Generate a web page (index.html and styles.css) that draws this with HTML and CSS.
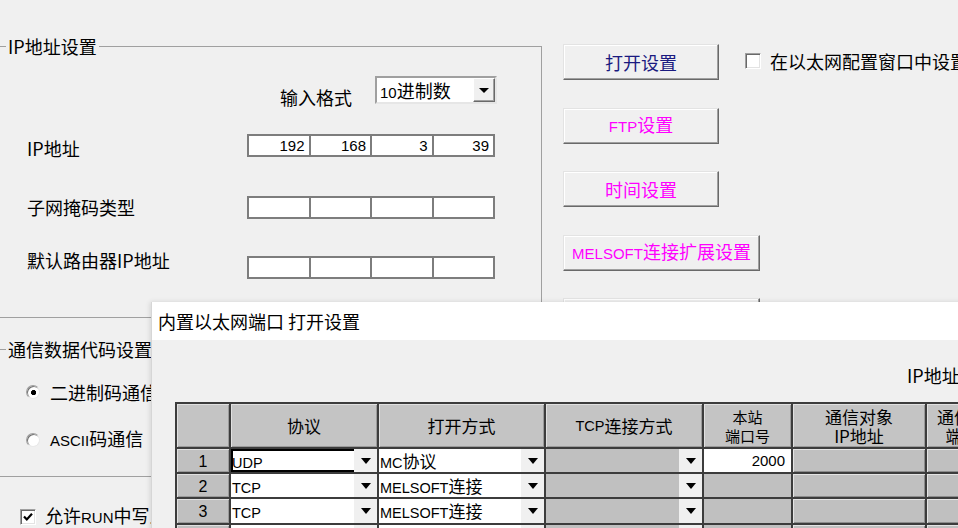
FILE: index.html
```html
<!DOCTYPE html>
<html lang="zh-CN">
<head>
<meta charset="utf-8">
<title>内置以太网端口设置</title>
<link rel="stylesheet" href="styles.css">
</head>
<body>
<div class="screen">
  <div class="main">
    <div class="left">
      <fieldset class="group ip-group">
        <legend>IP地址设置</legend>
        <div class="format-row">
          <span class="format-label">输入格式</span>
          <div class="select">
            <span class="select-value"><span class="lat">10</span>进制数</span>
            <span class="select-btn"><i class="tri tri-sm"></i></span>
          </div>
        </div>
        <div class="ip-row row-ip">
          <span class="ip-label">IP地址</span>
          <div class="ip-boxes"><span>192</span><span>168</span><span>3</span><span>39</span></div>
        </div>
        <div class="ip-row row-mask">
          <span class="ip-label">子网掩码类型</span>
          <div class="ip-boxes"><span></span><span></span><span></span><span></span></div>
        </div>
        <div class="ip-row row-gw">
          <span class="ip-label">默认路由器IP地址</span>
          <div class="ip-boxes"><span></span><span></span><span></span><span></span></div>
        </div>
      </fieldset>
      <fieldset class="group code-group">
        <legend>通信数据代码设置</legend>
        <div class="radio-row"><span class="radio checked"></span><span>二进制码通信</span></div>
        <div class="radio-row radio-row-2"><span class="radio"></span><span><span class="lat">ASCII</span>码通信</span></div>
      </fieldset>
      <div class="check-row">
        <span class="checkbox"><svg viewBox="0 0 14 14" width="14" height="14"><polyline points="3,6.5 5.8,9.5 11,3.8" fill="none" stroke="#000" stroke-width="2.2"/></svg></span>
        <span>允许<span class="lat">RUN</span>中写入(<span class="lat">FTP</span>与<span class="lat">MC</span>协议)</span>
      </div>
    </div>
    <div class="right">
      <div class="btn-line">
        <button class="btn btn-navy">打开设置</button>
        <div class="check-inline"><span class="checkbox"></span><span>在以太网配置窗口中设置</span></div>
      </div>
      <button class="btn btn-pink"><span class="lat">FTP</span>设置</button>
      <button class="btn btn-pink">时间设置</button>
      <button class="btn btn-pink btn-wide"><span class="lat">MELSOFT</span>连接扩展设置</button>
      <button class="btn btn-wide">用户连接设置</button>
    </div>
  </div>

  <section class="dialog">
    <header class="dialog-title">内置以太网端口 打开设置</header>
    <div class="dialog-body">
      <div class="ip-caption">IP地址</div>
      <div class="grid">
        <div class="hd"></div>
        <div class="hd">协议</div>
        <div class="hd">打开方式</div>
        <div class="hd"><span class="lat">TCP</span>连接方式</div>
        <div class="hd hd2">本站<br>端口号</div>
        <div class="hd hd2 hd-wide">通信对象<br>IP地址</div>
        <div class="hd hd2 hd-wide">通信对象<br>端口号</div>

        <div class="num">1</div>
        <div class="cb white selected"><span class="cb-text"><span class="lat">UDP</span></span><span class="dd"><i class="tri"></i></span></div>
        <div class="cb white"><span class="cb-text"><span class="lat">MC</span>协议</span><span class="dd"><i class="tri"></i></span></div>
        <div class="cb gray"><span class="cb-text"></span><span class="dd"><i class="tri"></i></span></div>
        <div class="port white">2000</div>
        <div class="raised"></div>
        <div class="raised"></div>

        <div class="num">2</div>
        <div class="cb white"><span class="cb-text"><span class="lat">TCP</span></span><span class="dd"><i class="tri"></i></span></div>
        <div class="cb white"><span class="cb-text"><span class="lat">MELSOFT</span>连接</span><span class="dd"><i class="tri"></i></span></div>
        <div class="cb gray"><span class="cb-text"></span><span class="dd"><i class="tri"></i></span></div>
        <div class="port gray"></div>
        <div class="raised"></div>
        <div class="raised"></div>

        <div class="num">3</div>
        <div class="cb white"><span class="cb-text"><span class="lat">TCP</span></span><span class="dd"><i class="tri"></i></span></div>
        <div class="cb white"><span class="cb-text"><span class="lat">MELSOFT</span>连接</span><span class="dd"><i class="tri"></i></span></div>
        <div class="cb gray"><span class="cb-text"></span><span class="dd"><i class="tri"></i></span></div>
        <div class="port gray"></div>
        <div class="raised"></div>
        <div class="raised"></div>

        <div class="num">4</div>
        <div class="cb white"><span class="cb-text"><span class="lat">TCP</span></span><span class="dd"><i class="tri"></i></span></div>
        <div class="cb white"><span class="cb-text"><span class="lat">MELSOFT</span>连接</span><span class="dd"><i class="tri"></i></span></div>
        <div class="cb gray"><span class="cb-text"></span><span class="dd"><i class="tri"></i></span></div>
        <div class="port gray"></div>
        <div class="raised"></div>
        <div class="raised"></div>
      </div>
    </div>
  </section>
</div>
</body>
</html>
```

FILE: styles.css
```css
* { box-sizing: border-box; }
html, body { margin: 0; padding: 0; }
body {
  background: #f0f0f0;
  font-family: "Noto Sans CJK SC", sans-serif;
  font-size: 18px;
  line-height: 22px;
  color: #000;
}
.lat { font-family: "Liberation Sans", "Noto Sans CJK SC", sans-serif; font-size: 15px; }

.screen {
  position: relative;
  width: 958px;
  height: 528px;
  overflow: hidden;
  background: #f0f0f0;
}
.main { display: flex; align-items: flex-start; }

/* ---------- left column ---------- */
.left { flex: none; width: 545px; margin-left: -3px; }
.group {
  margin: 0;
  padding: 0;
  min-width: 0;
  border: 1px solid #a0a0a0;
  border-left-color: transparent;
}
.group legend {
  margin-left: 8px;
  padding: 0 2px;
  font-size: 18px;
  line-height: 22px;
  white-space: nowrap;
}
.ip-group { margin-top: 35px; padding-bottom: 38px; }

.format-row { display: flex; align-items: flex-start; gap: 23px; margin-top: 19px; padding-left: 282px; }
.format-label { margin-top: 10px; margin-bottom: -10px; }
.select {
  display: flex;
  width: 122px;
  height: 28px;
  background: #fff;
  border: 2px solid;
  border-color: #a0a0a0 #e6e6e6 #e6e6e6 #a0a0a0;
}
.select-value { flex: 1; padding-left: 3px; line-height: 24px; font-size: 18px; white-space: nowrap; }
.select-value .lat { font-size: 15px; }
.select-btn {
  width: 22px;
  display: flex;
  align-items: center;
  justify-content: center;
  background: #f0f0f0;
  border: 1px solid;
  border-color: #fff #696969 #696969 #fff;
  box-shadow: inset -1px -1px 0 #a0a0a0;
}

.ip-row { display: flex; align-items: flex-start; padding-left: 29px; }
.ip-label { width: 220px; flex: none; white-space: nowrap; }
.row-ip { margin-top: 30px; }
.row-ip .ip-label { margin-top: 3px; margin-bottom: -3px; }
.row-mask { margin-top: 39px; }
.row-mask .ip-label { margin-top: 0; margin-bottom: -1px; }
.row-gw { margin-top: 37px; }
.row-gw .ip-label { margin-top: -7px; }
.ip-boxes {
  display: flex;
  width: 248px;
  height: 23px;
  background: #fff;
  border: 2px solid #7d7d7d;
}
.ip-boxes span {
  flex: 1;
  border-left: 2px solid #7d7d7d;
  text-align: right;
  padding-right: 4px;
  font-family: "Liberation Sans", sans-serif;
  font-size: 15px;
  line-height: 19px;
}
.ip-boxes span:first-child { border-left: 0; }

.code-group { margin-top: 20px; padding-bottom: 24px; }
.radio-row { display: flex; align-items: center; gap: 10px; margin-top: 21px; padding-left: 28px; white-space: nowrap; }
.radio-row-2 { margin-top: 24px; }
.radio {
  flex: none;
  width: 14px;
  height: 14px;
  border-radius: 50%;
  background: #fff;
  border: 1px solid;
  border-color: #a0a0a0 #e8e8e8 #e8e8e8 #a0a0a0;
  box-shadow: inset 1px 1px 0 #707070;
}
.radio.checked { background: radial-gradient(circle at 55% 55%, #000 0 2.3px, #fff 2.9px); }

.check-row { display: flex; align-items: center; gap: 9px; margin-top: 27px; padding-left: 23px; white-space: nowrap; }
.checkbox {
  flex: none;
  width: 16px;
  height: 16px;
  background: #fff;
  border: 1px solid;
  border-color: #a0a0a0 #fff #fff #a0a0a0;
  box-shadow: inset 1px 1px 0 #696969, inset -1px -1px 0 #e3e3e3;
  display: flex;
  align-items: center;
  justify-content: center;
}
.checkbox svg { display: block; }

/* ---------- right column ---------- */
.right {
  flex: 1;
  min-width: 0;
  display: flex;
  flex-direction: column;
  align-items: flex-start;
  gap: 27.5px;
  padding-top: 44px;
  padding-left: 21px;
}
.btn-line { display: flex; align-items: center; white-space: nowrap; }
.btn {
  flex: none;
  width: 156px;
  height: 36px;
  padding: 0;
  background: #f0f0f0;
  border: 1px solid;
  border-color: #e3e3e3 #696969 #696969 #e3e3e3;
  box-shadow: inset -1px -1px 0 #a0a0a0, inset 1px 1px 0 #fff;
  font-family: "Noto Sans CJK SC", sans-serif;
  font-size: 18px;
  line-height: 22px;
  color: #000;
  white-space: nowrap;
}
.btn-wide { width: 197px; }
.btn-navy { color: #1a1a80; }
.btn-pink { color: #ff00ff; }
.btn .lat { font-size: 15px; }
.check-inline { display: flex; align-items: center; gap: 9px; margin-left: 26px; margin-bottom: 3px; }

/* ---------- dialog ---------- */
.dialog {
  position: absolute;
  left: 152px;
  top: 302px;
  width: 900px;
  height: 260px;
  background: #f0f0f0;
  box-shadow: -1px 0 0 #d6d6d6, -2px 0 5px rgba(0, 0, 0, 0.12);
}
.dialog-title {
  height: 38px;
  background: #fff;
  padding-left: 6px;
  line-height: 38px;
  font-size: 18px;
  white-space: nowrap;
}
.dialog-body { padding: 24px 0 0 23px; }
.ip-caption { margin-left: 732px; white-space: nowrap; }

.grid {
  display: grid;
  grid-template-columns: 52px 146px 165px 156px 87px 132px 88px;
  grid-template-rows: 43px 23px 23px 24px 23px;
  gap: 2px;
  padding: 2px;
  margin-top: 16px;
  width: max-content;
  background: #3c3c3c;
}
.grid .lat { font-size: 14.5px; }
.hd {
  background: #c4c4c4;
  box-shadow: inset 1px 1px 0 #e0e0e0, inset -1px -1px 0 #9a9a9a;
  display: flex;
  align-items: center;
  justify-content: center;
  text-align: center;
  font-size: 17px;
  line-height: 22px;
  white-space: nowrap;
  overflow: hidden;
}
.hd2 { font-size: 15px; line-height: 19px; }
.hd-wide { font-size: 17px; }
.num {
  background: #c0c0c0;
  box-shadow: inset 1px 1px 0 #e0e0e0, inset -1px -1px 0 #9a9a9a;
  text-align: center;
  font-family: "Liberation Sans", sans-serif;
  font-size: 16px;
  line-height: 25px;
}
.cb { display: flex; align-items: stretch; overflow: hidden; }
.cb-text { flex: 1; padding-left: 1px; font-size: 17px; line-height: 23px; white-space: nowrap; overflow: hidden; }
.white { background: #fff; }
.gray { background: #c0c0c0; }
.selected { box-shadow: inset 0 0 0 2px #000; }
.dd {
  flex: none;
  width: 23px;
  background: #f0f0f0;
  display: flex;
  align-items: center;
  justify-content: center;
}
.tri {
  display: block;
  width: 0;
  height: 0;
  border-left: 5px solid transparent;
  border-right: 5px solid transparent;
  border-top: 6px solid #000;
}
.tri-sm { border-left-width: 5px; border-right-width: 5px; border-top-width: 5px; }
.port {
  text-align: right;
  padding-right: 6px;
  font-family: "Liberation Sans", sans-serif;
  font-size: 15px;
  line-height: 23px;
}
.raised {
  background: #c0c0c0;
  box-shadow: inset 1px 1px 0 #e4e4e4, inset -1px -1px 0 #8c8c8c;
}
```
